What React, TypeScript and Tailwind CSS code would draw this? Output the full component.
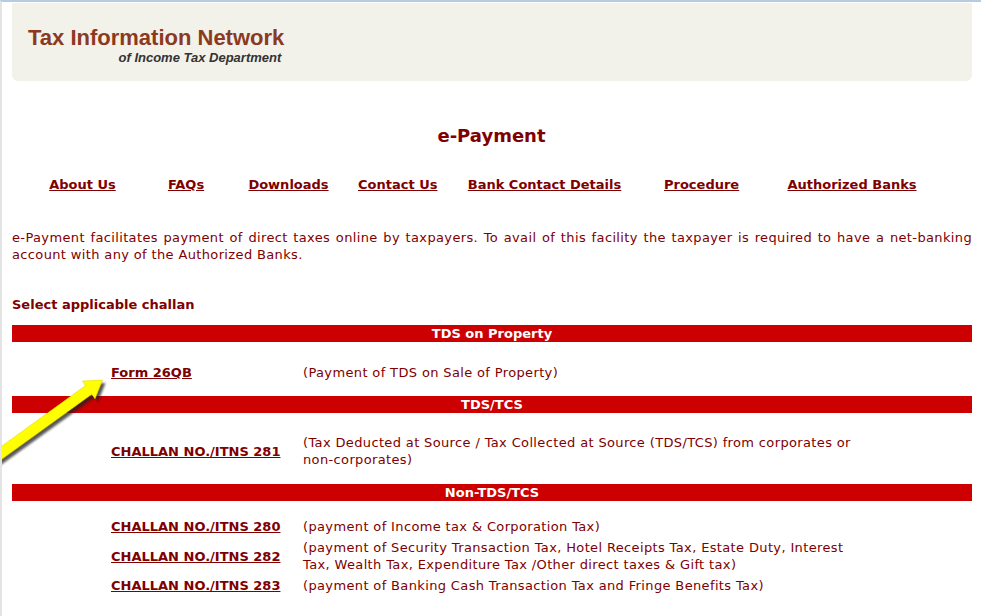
import React from "react";

const navItems: { label: string; w: string }[] = [
  { label: "About Us", w: "w-[141px]" },
  { label: "FAQs", w: "w-[66px]" },
  { label: "Downloads", w: "w-[139px]" },
  { label: "Contact Us", w: "w-[67px]" },
  { label: "Bank Contact Details", w: "w-[239px]" },
  { label: "Procedure", w: "w-[68px]" },
  { label: "Authorized Banks", w: "w-[240px]" },
];

function Bar({ title }: { title: string }) {
  return (
    <div className="h-[17px] bg-[#cc0000] text-white font-bold text-center text-[13px] leading-[17px]">
      {title}
    </div>
  );
}

function Row({
  link,
  children,
  className = "",
}: {
  link: string;
  children: React.ReactNode;
  className?: string;
}) {
  return (
    <div className={`flex items-center pl-[99px] ${className}`}>
      <div className="w-[192px] shrink-0">
        <a href="#" className="font-bold underline text-[#800000]">
          {link}
        </a>
      </div>
      <div className="text-[#800000] tracking-[0.36px]">{children}</div>
    </div>
  );
}

export default function App() {
  return (
    <div
      className="relative min-h-[616px] w-[981px] bg-white border-t-2 border-t-[#b7cbe3] border-l-2 border-l-[#e4e4e4] text-[13px] leading-[17px] text-[#800000] overflow-hidden"
      style={{ fontFamily: "Verdana, 'DejaVu Sans', sans-serif" }}
    >
      {/* Header */}
      <div className="ml-[10px] mr-[9px] mt-[1px] h-[78px] bg-[#f2f1ea] rounded-b-[6px] pl-[16px] pt-[22px]">
        <div
          className="inline-flex flex-col items-end"
          style={{ fontFamily: "Arial, 'Liberation Sans', sans-serif" }}
        >
          <div className="text-[22px] leading-[26px] font-bold text-[#8b3a1f]">
            Tax Information Network
          </div>
          <div className="text-[13px] leading-[14px] font-bold italic text-[#333333] pr-[3px]">
            of Income Tax Department
          </div>
        </div>
      </div>

      {/* Title */}
      <div className="mt-[44px] text-center text-[18px] leading-[22px] font-bold text-[#800000]">
        e-Payment
      </div>

      {/* Nav */}
      <div className="mt-[29px] ml-[10px] flex">
        {navItems.map((n) => (
          <div key={n.label} className={`${n.w} shrink-0 text-center whitespace-nowrap`}>
            <a href="#" className="font-bold underline text-[#800000]">
              {n.label}
            </a>
          </div>
        ))}
      </div>

      {/* Paragraph */}
      <div className="mt-[36px] mx-[10px] w-[960px] tracking-[0.36px]">
        <div className="text-justify [text-align-last:justify]">
          e-Payment facilitates payment of direct taxes online by taxpayers. To avail of this
          facility the taxpayer is required to have a net-banking
        </div>
        <div>account with any of the Authorized Banks.</div>
      </div>

      {/* Select */}
      <div className="mt-[33px] ml-[10px] font-bold">Select applicable challan</div>

      <div className="mt-[12px] ml-[10px] w-[960px]">
        <Bar title="TDS on Property" />
        <Row link="Form 26QB" className="pt-[22px] pb-[15px]">
          (Payment of TDS on Sale of Property)
        </Row>
        <Bar title="TDS/TCS" />
        <Row link="CHALLAN NO./ITNS 281" className="pt-[21px] pb-[16px]">
          (Tax Deducted at Source / Tax Collected at Source (TDS/TCS) from corporates or
          <br />
          non-corporates)
        </Row>
        <Bar title="Non-TDS/TCS" />
        <div className="pt-[17px] flex flex-col gap-[4px]">
          <Row link="CHALLAN NO./ITNS 280">(payment of Income tax &amp; Corporation Tax)</Row>
          <Row link="CHALLAN NO./ITNS 282">
            (payment of Security Transaction Tax, Hotel Receipts Tax, Estate Duty, Interest
            <br />
            Tax, Wealth Tax, Expenditure Tax /Other direct taxes &amp; Gift tax)
          </Row>
          <Row link="CHALLAN NO./ITNS 283">
            (payment of Banking Cash Transaction Tax and Fringe Benefits Tax)
          </Row>
        </div>
      </div>

      {/* Annotation arrow */}
      <svg
        className="absolute left-0 top-0 pointer-events-none"
        width="981"
        height="616"
        viewBox="2 2 981 616"
      >
        <defs>
          <filter id="blur" x="-20%" y="-20%" width="140%" height="140%">
            <feGaussianBlur stdDeviation="1.2" />
          </filter>
        </defs>
        <polygon
          points="105.5,383 98,401.7 94.8,397.2 -4.9,469.2 -11.1,460.6 88.6,388.6 85.4,384.1"
          fill="#222"
          opacity="0.75"
          filter="url(#blur)"
        />
        <polygon
          points="102.5,380 95,398.7 91.8,394.2 -7.9,466.2 -14.1,457.6 85.6,385.6 82.4,381.1"
          fill="#ffff00"
          stroke="#e6d800"
          strokeWidth="0.6"
        />
      </svg>
    </div>
  );
}
